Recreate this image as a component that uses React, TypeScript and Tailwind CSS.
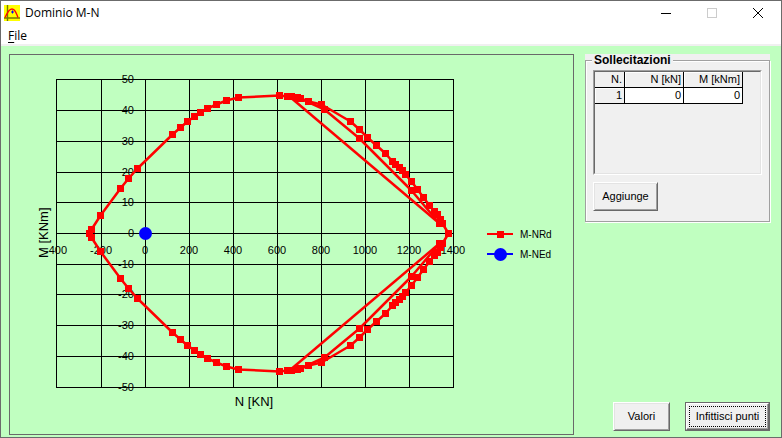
import React from "react";

type Point = [number, number];

const gridX = [56, 101, 145, 189, 233, 277, 321, 365, 409, 453];
const gridY = [79, 110, 141, 172, 202, 233, 264, 294, 325, 356, 387];

const outer: Point[] = [
  [89, 233], [91, 229], [100, 215], [120, 188], [128, 178], [137, 168],
  [172, 134], [180, 127], [187, 121], [194, 116], [200, 112], [207, 108],
  [216, 104], [226, 100], [238, 97], [279, 95], [287, 96], [291, 96],
  [297, 97], [300, 98], [308, 101], [321, 104], [350, 121], [359, 129],
  [367, 137], [376, 145], [385, 153], [392, 161], [395, 164], [399, 167],
  [402, 170], [405, 174], [411, 181], [417, 189], [423, 197], [429, 205],
  [434, 211], [437, 214], [440, 219], [442, 223], [448, 233],
];
const inner: Point[] = [
  [300, 98], [324, 109], [359, 138], [411, 190], [439, 223],
];
const chord: Point[] = [[289, 96], [439, 223]];

const mirror = (points: Point[]): Point[] => points.map(([x, y]) => [x, 466 - y]);
const curves = [outer, inner, chord, mirror(outer), mirror(inner), mirror(chord)];
const toPath = (points: Point[]) => points.map(([x, y]) => `${x + 0.5},${y + 0.5}`).join(" ");

const buttonBase =
  "h-[29px] border border-t-white border-l-white border-r-[#696969] border-b-[#696969] bg-[#f0f0f0] text-[11px] leading-none text-black shadow-[inset_1px_1px_0_#e3e3e3,inset_-1px_-1px_0_#a0a0a0]";

function Chart() {
  return (
    <svg viewBox="10 55 563 379" className="block h-full w-full" role="img" aria-label="Dominio M-N">
      <g shapeRendering="crispEdges">
        {gridX.map((x) => (
          <rect key={x} x={x} y={79} width={1} height={309} />
        ))}
        {gridY.map((y) => (
          <rect key={y} x={56} y={y} width={398} height={1} />
        ))}
      </g>
      <g fontSize={11}>
        {gridY.map((y, i) => (
          <text key={y} x={134} y={y + 4} textAnchor="end">{50 - i * 10}</text>
        ))}
        {gridX.map((x, i) => (
          <text key={x} x={x} y={254} textAnchor="middle">{-400 + i * 200}</text>
        ))}
      </g>
      <g fontSize={13}>
        <text x={254} y={406} textAnchor="middle">N [KN]</text>
        <text transform="translate(48 258) rotate(-90)">M [KNm]</text>
      </g>
      <g fill="none" stroke="#ff0000" strokeWidth={2.5} strokeLinejoin="round">
        {curves.map((c, i) => (
          <polyline key={i} points={toPath(c)} />
        ))}
      </g>
      <g fill="#ff0000" shapeRendering="crispEdges">
        {curves.flat().map(([x, y], i) => (
          <rect key={i} x={x - 3} y={y - 3} width={7} height={7} />
        ))}
        <rect x={487} y={233} width={26} height={2} />
        <rect x={497} y={231} width={7} height={7} />
      </g>
      <g fill="#0000ff">
        <circle cx={145.5} cy={233.5} r={6.5} />
        <rect x={487} y={253} width={26} height={2} />
        <circle cx={500.5} cy={254.5} r={6.5} />
      </g>
      <g fontSize={10}>
        <text x={520} y={238}>M-NRd</text>
        <text x={520} y={258}>M-NEd</text>
      </g>
    </svg>
  );
}

function WindowButton({ label, children, disabled }: { label: string; children: React.ReactNode; disabled?: boolean }) {
  return (
    <button type="button" aria-label={label} disabled={disabled} className="flex h-full w-[46px] items-center justify-center">
      <svg width="12" height="12" viewBox="0 0 12 12" fill="none" stroke={disabled ? "#cccccc" : "#000000"}>
        {children}
      </svg>
    </button>
  );
}

export default function App() {
  return (
    <div className="flex h-screen flex-col border border-[#6b6b6b] bg-[#c0ffc0] font-['Liberation_Sans',Arial,sans-serif] text-[11px] text-black">
      <header className="flex h-6 shrink-0 items-center bg-white pl-[3px] font-['Open_Sans','Noto_Sans',sans-serif] text-[12px]">
        <svg width="16" height="16" viewBox="0 0 16 16">
          <rect width="16" height="16" fill="#ffff00" />
          <path d="M3.5 0V16M0 13H16" stroke="#777700" strokeWidth="1.4" />
          <path d="M1 12.500C3.500 8 4.500 4 8 4S12 8 14 12.500" fill="none" stroke="#ff0000" strokeWidth="1.3" />
          <path d="M7 7h3M8.500 5.500v3" stroke="#0000ff" />
        </svg>
        <h1 className="ml-[5px] flex-1 leading-4">Dominio M-N</h1>
        <WindowButton label="Riduci a icona">
          <path d="M1 6.500H11" />
        </WindowButton>
        <WindowButton label="Ingrandisci" disabled>
          <rect x="1.500" y="1.500" width="9" height="9" />
        </WindowButton>
        <WindowButton label="Chiudi">
          <path d="M1 1L11 11M11 1L1 11" />
        </WindowButton>
      </header>
      <nav className="flex h-[21px] shrink-0 items-center border-b-2 border-[#f0f0f0] bg-white pt-0.5 pl-[7px] font-['Open_Sans','Noto_Sans',sans-serif] text-[12px]">
        <button type="button" className="leading-4"><span className="underline underline-offset-2">F</span>ile</button>
      </nav>
      <main className="flex min-h-0 flex-1 gap-[11px] pt-2 pr-[11px] pb-0.5 pl-2">
        <section className="min-w-0 flex-1 border border-[#696969]">
          <Chart />
        </section>
        <aside className="flex w-[185px] shrink-0 flex-col justify-between pb-1">
          <div className="bg-[#f0f0f0] pr-px pb-px">
            <fieldset className="border border-[#a0a0a0] px-[7px] pb-[10px] shadow-[1px_1px_0_#fff,inset_1px_1px_0_#fff]">
              <legend className="-ml-px bg-[#f0f0f0] px-0.5 text-[12px] leading-[13px] font-bold">Sollecitazioni</legend>
              <div className="mt-[3px] h-[105px] w-[169px] border border-t-[#a0a0a0] border-r-white border-b-white border-l-[#a0a0a0]">
                <div className="h-full border border-t-[#696969] border-r-[#e3e3e3] border-b-[#e3e3e3] border-l-[#696969]">
                  <table className="w-[148px] table-fixed border-separate border-spacing-0 text-right leading-[15px]">
                    <thead>
                      <tr>
                        <th scope="col" className="w-[30px] border-r border-b border-black pr-0.5 font-normal">N.</th>
                        <th scope="col" className="border-r border-b border-black pr-0.5 font-normal shadow-[inset_1px_1px_0_#fff]">N [kN]</th>
                        <th scope="col" className="border-r border-b border-black pr-0.5 font-normal shadow-[inset_1px_1px_0_#fff]">M [kNm]</th>
                      </tr>
                    </thead>
                    <tbody>
                      <tr>
                        <th scope="row" className="border-r border-b border-black pr-0.5 font-normal shadow-[inset_1px_1px_0_#fff]">1</th>
                        <td className="border-r border-b border-black bg-white pr-0.5">0</td>
                        <td className="border-r border-b border-black bg-white pr-0.5">0</td>
                      </tr>
                    </tbody>
                  </table>
                </div>
              </div>
              <button type="button" className={`mt-[7px] block w-[65px] ${buttonBase}`}>Aggiunge</button>
            </fieldset>
          </div>
          <div className="flex justify-end gap-[15px]">
            <button type="button" className={`w-[57px] ${buttonBase}`}>Valori</button>
            <div className="border border-[#696969]">
              <button type="button" className="block h-[27px] w-[83px] border border-t-white border-r-[#696969] border-b-[#696969] border-l-white bg-[#f0f0f0] p-0.5 text-[11px] leading-none shadow-[inset_-1px_-1px_0_#a0a0a0]">
                <span className="flex h-full items-center justify-center border border-dotted border-black">Infittisci punti</span>
              </button>
            </div>
          </div>
        </aside>
      </main>
    </div>
  );
}
